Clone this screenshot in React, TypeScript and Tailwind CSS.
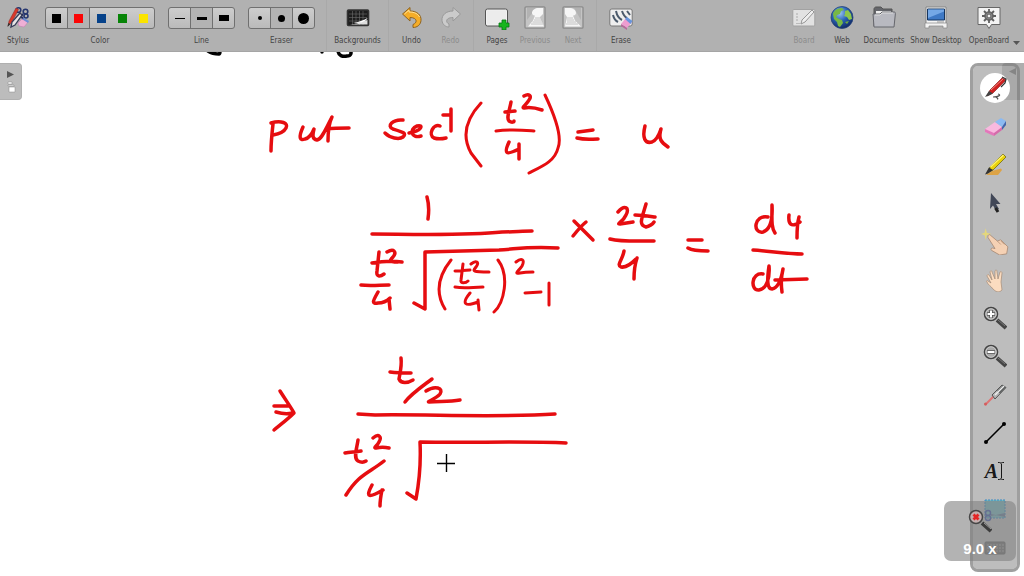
import React from "react";

type IconProps = { children: React.ReactNode; className?: string };

function Icon({ children, className = "size-6" }: IconProps) {
  return (
    <svg viewBox="0 0 24 24" className={`${className} shrink-0`} fill="none" aria-hidden="true">
      {children}
    </svg>
  );
}

function ToolButton({ label, icon, className, disabled }: { label: string; icon: React.ReactNode; className: string; disabled?: boolean }) {
  return (
    <button type="button" disabled={disabled} className={`flex h-full flex-col items-center gap-1 pt-[6px] ${className}`}>
      {icon}
      <span className={`whitespace-nowrap text-[8px] leading-[14px] ${disabled ? "text-[#8c8c8c]" : "text-[#454545]"}`}>{label}</span>
    </button>
  );
}

type Choice = { name: string; mark: string };

function ChoiceGroup({ label, items, selected, joined }: { label: string; items: Choice[]; selected: number; joined?: boolean }) {
  return (
    <div className="flex flex-col items-center pt-[7px]" role="group" aria-label={label}>
      <div
        className={`flex h-[22px] overflow-hidden rounded-[3px] border border-[#707070] bg-linear-to-b from-[#cdcdcd] to-[#bababa] ${joined ? "w-[110px]" : "w-[67px]"}`}
      >
        {items.map((item, i) => (
          <button
            key={item.name}
            type="button"
            aria-label={item.name}
            className={`flex h-full flex-1 items-center justify-center border-[#707070] ${i > 0 && (!joined || i <= 2) ? "border-l" : ""} ${i === selected ? "bg-[#b3b3b3]" : ""}`}
          >
            <span className={`block ${item.mark}`} />
          </button>
        ))}
      </div>
      <span className="mt-[5px] text-[8px] leading-[14px] text-[#454545]">{label}</span>
    </div>
  );
}

const colors: Choice[] = [
  { name: "Black", mark: "size-[9px] bg-black" },
  { name: "Red", mark: "size-[9px] bg-[#fb0606]" },
  { name: "Blue", mark: "size-[9px] bg-[#06428a]" },
  { name: "Green", mark: "size-[9px] bg-[#078407]" },
  { name: "Yellow", mark: "size-[9px] bg-[#fbe400]" },
];
const lines: Choice[] = [
  { name: "Fine line", mark: "h-px w-[10px] bg-black" },
  { name: "Medium line", mark: "h-[3px] w-[10px] bg-black" },
  { name: "Strong line", mark: "h-[6px] w-[10px] bg-black" },
];
const erasers: Choice[] = [
  { name: "Small eraser", mark: "size-1 rounded-full bg-black" },
  { name: "Medium eraser", mark: "size-[7px] rounded-full bg-black" },
  { name: "Large eraser", mark: "size-[11px] rounded-full bg-black" },
];

const StylusIcon = () => (
  <Icon>
    <path d="M12 13 17 8M14 9l4 5" stroke="#1d2c63" strokeWidth="2" />
    <circle cx="12.5" cy="4" r="2.3" stroke="#26366f" strokeWidth="1.6" />
    <circle cx="19.5" cy="5.5" r="2.3" stroke="#26366f" strokeWidth="1.6" />
    <circle cx="20" cy="10" r="2" stroke="#26366f" strokeWidth="1.6" />
    <path d="m2 20 1-5L10 2l2.500 1.500L6 16Z" fill="#d9392b" stroke="#8e2c26" strokeWidth=".5" />
    <path d="m5 21 1-5 8-9 2 2-7 10Z" fill="#e7e5e5" stroke="#373b58" strokeWidth="1.300" />
    <path d="m1.500 21 .8-4 2.200 1Z" fill="#333" />
    <path d="m12 17 4-4 6 3-4 5-5-1Z" fill="#efafd5" stroke="#c37bad" strokeWidth=".5" />
    <path d="m16 13 2-1 5 3-1 2Z" fill="#6c8fd4" />
  </Icon>
);
const BackgroundsIcon = () => (
  <Icon>
    <rect x="1.500" y="4" width="21" height="15.500" rx="1" fill="#1d1d1d" stroke="#343434" strokeWidth="1.600" />
    <path d="M3 8h18M3 11.500h18M3 15h18M6.500 5v14M10 5v14M13.500 5v14M17 5v14" stroke="#6d6d6d" strokeWidth=".6" />
    <path d="M4 18.500c5-.3 9-1.500 12-3l5.500-1.500v4.500Z" fill="#ddd" />
    <path d="M7 17c6-1 10-2.500 14.500-5-1 3-6 5.500-14.500 5Z" fill="#fff" />
  </Icon>
);
const UndoIcon = () => (
  <Icon>
    <path d="M2.500 8 10 1.500V5c7 0 11.500 4 11 9.500-.4 4.500-4 7-8 7v-3c5-2 4-7-3-7V15Z" fill="#f5ad28" stroke="#8d6320" strokeWidth="1" />
    <path d="m4.500 8 4.500-4V6c6 0 9 2 10.500 5" stroke="#ffe095" />
  </Icon>
);
const RedoIcon = () => (
  <Icon>
    <path d="M21.500 8 14 1.500V5C7 5 2.500 9 3 14.500c.4 4 3.500 6.500 7 6.500v-3c-4-2-3-6.500 4-6.500V15Z" fill="#cbcbcb" stroke="#999" />
  </Icon>
);
const PagesIcon = () => (
  <Icon className="h-6 w-[26px]">
    <rect x=".5" y="3" width="22" height="17" rx="2" fill="#f3f3f3" stroke="#555" />
    <rect x="2" y="4.500" width="19" height="14" fill="#ececec" />
    <path d="M17 14h4v3h3v4h-3v3h-4v-3h-3v-4h3Z" fill="#17b51d" stroke="#087614" strokeWidth=".8" />
  </Icon>
);
const PreviousIcon = () => (
  <Icon>
    <rect x="2" y=".8" width="20" height="21.400" rx="1" fill="#c4c4c4" stroke="#8a8a8a" strokeWidth="1.300" />
    <path d="M4 2h9L4 14Z" fill="#b2b2b2" />
    <path d="M9 7c0-3 3-5 7-5h4v6l-3 3 4 9.500H5l5-6 2-5c-1 0-3-.5-3-2.500Z" fill="#f6f6f6" />
    <path d="M12 12h6M11 14h8M9.500 16h10M8 18h12" stroke="#b5b5b5" strokeWidth=".8" />
  </Icon>
);
const NextIcon = () => (
  <Icon>
    <rect x="2" y=".8" width="20" height="21.400" rx="1" fill="#c4c4c4" stroke="#8a8a8a" strokeWidth="1.300" />
    <path d="M13 2h7v12Z" fill="#b2b2b2" />
    <path d="M15 7c0-3-3-5-7-5H4v6l2 3-2 9.500h16l-6-6-2-5c1 0 3-.5 3-2.500Z" fill="#f6f6f6" />
    <path d="M6 12h6M6 14h7M6 16h9M5 18h12" stroke="#b5b5b5" strokeWidth=".8" />
  </Icon>
);
const EraseIcon = () => (
  <Icon>
    <rect x=".8" y="3" width="22.400" height="17" rx="2" fill="#eee" stroke="#777" />
    <path d="M4 9c1 4 3 6 5 7M7 5c1 5 4 8 6 9M13 5c1 3 3 6 5 7M18 5l3 4" stroke="#4b5a6b" strokeWidth="2" />
    <path d="m12 18 5-6 6 4-5 6Z" fill="#ee9dd0" />
    <path d="m16 13 2-2 5.500 4-2 3Z" fill="#6795dc" />
    <path d="m12 18 6 4v2l-6-4Z" fill="#b5699a" />
  </Icon>
);
const BoardIcon = () => (
  <Icon>
    <rect x=".8" y="3.500" width="22" height="16.500" rx="1" fill="#e2e2e2" stroke="#a2a2a2" />
    <path d="M5 7v9" stroke="#aaa" strokeDasharray="2 1" />
    <path d="m9 18 1-4L20 4l2 2-9 10Z" fill="#eee" stroke="#969696" />
    <path d="M4 17.500h5" stroke="#bbb" />
  </Icon>
);
const WebIcon = () => (
  <Icon>
    <defs>
      <radialGradient id="sea" cx=".4" cy=".3" r=".7">
        <stop stopColor="#9ac5f2" />
        <stop offset=".5" stopColor="#2b65b5" />
        <stop offset="1" stopColor="#102a68" />
      </radialGradient>
    </defs>
    <circle cx="12" cy="11.500" r="11" fill="url(#sea)" stroke="#24447a" strokeWidth=".8" />
    <path d="M3 8c1-4 5-6 9-6l2 2-3 1-1 3-3 1-1 2 3 2 3 1 1 3-3 4-2-1-1-4-3-3Z" fill="#78b845" />
    <path d="m15 5 3-1 3 4 1 5-3 1-2-3-3-1 1-2Z" fill="#8bc64d" />
    <path d="m15 16 4-1-2 3Z" fill="#70ad42" />
  </Icon>
);
const DocumentsIcon = () => (
  <Icon>
    <path d="M2 3c0-1 1-2 2-2h5l2 2h9v17H2Z" fill="#65666b" stroke="#555" />
    <path d="M4 5h15v12H4Z" fill="#eee" />
    <path d="M1 8h7l2-2h12c1 0 1.500.5 1.400 1.500L22 21H2Z" fill="#b8b9c0" stroke="#65666c" />
    <path d="M3 9h5l2-2h11" stroke="#ddd" />
  </Icon>
);
const DesktopIcon = () => (
  <Icon>
    <path d="M2 1h20v17H2Z" fill="#f5f5f5" stroke="#858585" />
    <path d="M3.500 3h17v11h-17Z" fill="#3f79c5" stroke="#17365f" />
    <path d="M4 3.500h16v2L4 12Z" fill="#75a8e6" />
    <path d="M1 17h22v5h-4v-2H5v2H1Z" fill="#f2f2f2" stroke="#888" strokeWidth=".7" />
    <path d="M13 16h7" stroke="#999" />
  </Icon>
);
const OpenBoardIcon = () => (
  <Icon>
    <path d="M1 1.500h22v17h-8.500l-2.500 4-2.500-4H1Z" fill="#f3f3f3" stroke="#666" />
    <circle cx="12" cy="10" r="3.800" fill="#aaa" stroke="#666" strokeWidth="2" />
    <circle cx="12" cy="10" r="2" fill="#eee" stroke="#555" />
    <path d="M12 3v3M12 14v3M5 10h3M16 10h3M7 5l2 2M15 13l2 2M17 5l-2 2M9 13l-2 2" stroke="#5e5e5e" strokeWidth="1.800" />
  </Icon>
);

const PenTool = () => (
  <Icon>
    <path d="m4 20 3-6L19 2l4 2L10 17Z" fill="#cf2020" stroke="#7e1717" strokeWidth=".6" />
    <path d="M8 14 20 3" stroke="#f4847c" />
    <path d="m2 21 4-6 4 2.500-4 2Z" fill="#424242" />
    <path d="m19 1 4 2-1 4-4 4" stroke="#333" strokeWidth="1.300" />
    <path d="M10 21c5 0 9-2 5-3m-2 3c1 1 3 2 1 2" stroke="#555" strokeWidth="1.200" />
  </Icon>
);
const EraserTool = () => (
  <Icon>
    <path d="m2 15 10-7 7 5-8 8-9-3Z" fill="#f8b9df" />
    <path d="m2 15 9 4v3l-9-4Z" fill="#e377ba" />
    <path d="m11 19 8-6v3l-8 6Z" fill="#d56baa" />
    <path d="m12 8 6-4 5 3-4 6Z" fill="#8bbaf2" />
    <path d="m19 13 4-6v4l-4 5Z" fill="#4165ae" />
  </Icon>
);
const MarkerTool = () => (
  <Icon>
    <path d="m3 22 6-4 9-2.500 1 1.500-4 5Z" fill="#dda345" />
    <path d="m4 20 3-6L20 1l3 3L10 17Z" fill="#ead20a" stroke="#625b08" strokeWidth=".7" />
    <path d="m7.500 14 13-12" stroke="#fff36a" strokeWidth="1.500" />
    <path d="m2 21.500 4-7 4 2.500-5 3.500Z" fill="#333" />
  </Icon>
);
const PointerTool = () => (
  <Icon>
    <path d="m8 2 9.500 11-4.500-.1 3 5-3 1.600-3-5L7 18Z" fill="#414757" />
    <path d="m12.500 17 2.500 4" stroke="#222" strokeWidth="3" />
  </Icon>
);
const TouchTool = () => (
  <Icon className="size-7">
    <path d="m4 1-1 4-3 1 3 1 1 4 1-4 4-1-4-1Z" fill="#e4d77b" />
    <path d="M6 8c0-1 1-2 2-1l6 5 3-1 6 6-1 6-6 1-7-4c-1-1 0-2 1-2l2 .5L6 9Z" fill="#f5d1b4" stroke="#a17f68" strokeWidth=".6" />
    <path d="m14 12 3 3m0-3 3 3" stroke="#b99378" strokeWidth=".7" />
  </Icon>
);
const HandTool = () => (
  <Icon>
    <path d="M10 21c-2-3-5-4-6-7-1-1 0-2 1-1l3 2L4 8c0-1 1-2 2-1l3 5-2-8c0-1 2-2 2 0l3 7 0-8c1-2 2-1 2 1l1 7 2-7c1-1 2 0 2 1l-1 9 1 8c-3 3-6 2-9-1Z" fill="#fbdcc0" stroke="#a58b77" strokeWidth=".7" />
  </Icon>
);
const Lens = ({ minus = false }: { minus?: boolean }) => (
  <Icon>
    <path d="m14 14 9 8" stroke="#444" strokeWidth="4" />
    <path d="m15 14 7 6" stroke="#777" />
    <circle cx="8" cy="8" r="6.500" fill="#aaa" stroke="#444" strokeWidth="1.600" />
    <circle cx="8" cy="8" r="5.300" stroke="#ddd" strokeWidth=".7" />
    <path d={minus ? "M4 8h8" : "M4 8h8M8 4v8"} stroke="#555" strokeWidth="3.500" />
    <path d={minus ? "M4.500 8h7" : "M4.500 8h7M8 4.500v7"} stroke="white" strokeWidth="2" />
  </Icon>
);
const LaserTool = () => (
  <Icon>
    <path d="M2 22 11 13" stroke="#df7474" strokeWidth="2" />
    <circle cx="2.500" cy="21" r="1.500" fill="#d25e5e" />
    <path d="M9 12 19 2l4 2.500L12 16Z" fill="#b5b5b5" stroke="#555" />
    <path d="m14 8 6-6 3 2.500-6 6Z" fill="#5f6262" />
    <path d="m12 12 9-9" stroke="#eee" strokeWidth="1.400" />
  </Icon>
);
const LineTool = () => (
  <Icon>
    <path d="M3 21 21 3" stroke="black" strokeWidth="1.600" />
    <circle cx="3" cy="21" r="2" fill="black" />
    <circle cx="21" cy="3" r="2" fill="black" />
  </Icon>
);
const TextTool = () => (
  <span className="flex items-center font-['Liberation_Serif',serif] text-[20px] leading-6 text-[#181818]">
    <b className="italic">A</b>
    <svg viewBox="0 0 6 20" className="h-5 w-[6px]" fill="none" stroke="currentColor" aria-hidden="true">
      <path d="M0 1.500c2 0 3 0 3 1 0-1 1-1 3-1M3.500 3v14M0 18.500c2 0 3 0 3-1 0 1 1 1 3 1" />
    </svg>
  </span>
);
const CaptureTool = () => (
  <Icon>
    <rect x="2" y="2" width="20" height="18" fill="#76b7bd" stroke="#378bc4" strokeDasharray="2 1" />
    <path d="m8 18 14-3v4l-14-3" fill="#667d9c" />
    <circle cx="5" cy="15" r="2.500" stroke="#4057ac" strokeWidth="1.500" />
    <circle cx="5" cy="20" r="2.500" stroke="#4057ac" strokeWidth="1.500" />
  </Icon>
);
const KeyboardTool = () => (
  <Icon>
    <rect x="2" y="6" width="20" height="12" rx="1" fill="#777" stroke="#666" />
    <path d="M4 9h17M4 12h17M4 15h17" stroke="#aaa" strokeDasharray="2 1" />
  </Icon>
);

const palette = [
  { name: "Pen", icon: <PenTool /> },
  { name: "Eraser", icon: <EraserTool /> },
  { name: "Highlighter", icon: <MarkerTool /> },
  { name: "Select", icon: <PointerTool /> },
  { name: "Interact", icon: <TouchTool /> },
  { name: "Scroll page", icon: <HandTool /> },
  { name: "Zoom in", icon: <Lens /> },
  { name: "Zoom out", icon: <Lens minus /> },
  { name: "Laser pointer", icon: <LaserTool /> },
  { name: "Draw lines", icon: <LineTool /> },
  { name: "Write text", icon: <TextTool /> },
  { name: "Capture", icon: <CaptureTool /> },
  { name: "Virtual keyboard", icon: <KeyboardTool /> },
];

function Ink() {
  return (
    <svg
      viewBox="0 52 1024 524"
      className="absolute top-0 left-0 h-[524px] w-[1024px]"
      fill="none"
      strokeLinecap="round"
      strokeLinejoin="round"
      role="img"
      aria-label="Handwritten working on the board"
    >
      <g stroke="black" strokeWidth="3.500">
        <path d="M208 51c3 2 6 3 11 3 1 0 1-2 1-3M322 49v3M338 50c0 6 5 7 9 6 4 0 5-3 3-6" />
        <path d="M245 51h4" strokeWidth="2" />
      </g>
      <g stroke="#e60d10" strokeWidth="3.500">
        <path d="M273 124c-1 9-2 18-2 27M271 123c10-3 18 0 15 5-2 4-7 6-13 7M303 127c-5 11-3 14 2 12 4-1 7-5 9-10-2 8-1 10 3 11 5-1 8-10 15-23-3 6-4 15-4 24M327 129c7-1 15-1 22-1" />
        <path d="M403 120c-10-1-17 6-10 9 10 3 14 4 10 8-4 3-13 1-18-4M409 133c13-2 15-9 8-7-8 3-6 13 4 10M440 126c-7-3-12 9-6 12 3 1 8 1 12 0M443 115h8M451 109v22" />
        <path d="M511 102c-1 7-5 16-2 19 3 2 5 1 5 0M505 112l10-1M524 96c5-3 8 0 5 4-2 4-8 8-5 8 5-1 12 0 18 2M509 142c-5 11-4 14 10 7M519 144v15" />
        <path d="M578 132l15-2M577 138c8 2 14 1 21 1M645 126c-3 12 0 18 7 16 5-2 7-7 9-13-3 10 0 13 7 18" />
        <path d="M427 197c2 7 2 15 1 22M372 234c32 0 92 2 130-2 12 0 20-1 30-1M379 252l-2 19c-1 6 3 6 7 3M372 263c12-2 22-2 30-1M387 252c7-4 10 0 6 5-4 4-5 5 5 5M361 285c9 1 19 0 28 0M378 292c-5 9-7 12 0 11 5 0 9-2 12-5M389 299l1 10M414 303l11 6V252l74-2c18-1 29-4 59-2" />
        <path d="M574 221l19 19M586 222c-5 4-9 9-13 14" />
        <path d="M618 212c7-8 12-4 8 3-3 7-10 9-6 9l13-2M646 204c-4 14-8 21 0 23 4-1 6-2 8-5M635 215c7 0 13 1 20 2M610 239c12 3 27 2 44 2M624 251c-1 8-8 14-3 16 6 1 11-4 15-8M637 258c-3 9-3 14-3 21M688 240h14M688 248c5 3 13 3 20 3" />
        <path d="M768 217c-14-3-16 17-5 15 6-2 10-10 9-27 0 14-1 22 3 28M789 215c-1 9 2 13 11 7M799 217c-2 7-2 14-2 21M753 250c15 1 35 4 49 4M763 274c-12-2-13 17-4 16 8-1 11-13 10-24-2 14-2 23 3 23 6-1 9-8 11-20-2 8-2 16-1 23M775 280l32-1" />
        <path d="M280 391c7 11 12 18 14 22-6 6-14 12-20 17M274 406h15M276 412c7 2 12 2 16 1" />
        <path d="M401 358c1 8-1 15-2 21 2 5 9 4 14 1M390 372c8 1 14 1 21 1M432 379c-12 9-21 15-27 23M426 391c9-6 18-3 14 3-4 5-14 8-11 8 10-1 20 0 31-2" />
        <path d="M358 414l17 1c51-1 122 3 180-1" />
        <path d="M358 440c-1 8-5 18 0 21 2 1 5 2 8 0M345 453c5-1 11-1 16-2M373 438c6-5 9-1 6 4-2 4-6 6-3 6 4-1 9-1 13 0M384 461c-15 12-25 13-38 34M372 485c-7 13-3 13 11 5M382 490c-1 5-2 10-2 16M407 493l9 6c4-21 5-37 4-57 48 1 106-1 146 1" />
      </g>
      <g stroke="#e60d10" strokeWidth="3">
        <path d="M481 103c-15 16-20 32-10 50l10 13M496 131c15-2 25-1 38 0M545 95c9 19 18 41 13 53-3 13-15 18-29 25" />
        <path d="M451 260c-12 15-17 31-6 49M463 264l-2 16c-1 4 5 3 7 1M455 271l15-1M471 264c5-4 9-2 5 3-3 4-5 5 13 5M455 287c10 2 18 0 28 0M470 293c-9 11-5 14 8 9M478 300l1 10M498 260c12 16 6 43-4 52M516 262c6-5 9-2 6 4-3 5-9 8-2 7 5-1 9-1 13-1M525 293l16-1M549 283v22" />
      </g>
      <path d="M437 463.500h18M446.500 454v18" stroke="black" strokeWidth="1.400" strokeLinecap="butt" />
    </svg>
  );
}

export default function App() {
  return (
    <div className="flex h-screen flex-col overflow-hidden bg-white font-['DejaVu_Sans_Condensed','Noto_Sans',sans-serif]">
      <header className="z-10 flex h-[52px] shrink-0 justify-between border-b border-[#a5a5a5] bg-[#b1b1b1]">
        <div className="flex">
          <div className="flex gap-[13px] pr-[11px] pl-1">
            <ToolButton label="Stylus" icon={<StylusIcon />} className="w-7" />
            <ChoiceGroup label="Color" items={colors} selected={1} joined />
            <ChoiceGroup label="Line" items={lines} selected={1} />
            <ChoiceGroup label="Eraser" items={erasers} selected={1} />
          </div>
          <div className="flex border-l border-[#a9a9a9]">
            <ToolButton label="Backgrounds" icon={<BackgroundsIcon />} className="w-[61px]" />
          </div>
          <div className="flex border-l border-[#a9a9a9] px-[3px]">
            <ToolButton label="Undo" icon={<UndoIcon />} className="w-[39px]" />
            <ToolButton label="Redo" icon={<RedoIcon />} className="w-[39px]" disabled />
          </div>
          <div className="flex border-l border-[#a9a9a9] px-1">
            <ToolButton label="Pages" icon={<PagesIcon />} className="w-[38px]" />
            <ToolButton label="Previous" icon={<PreviousIcon />} className="w-[38px]" disabled />
            <ToolButton label="Next" icon={<NextIcon />} className="w-[38px]" disabled />
          </div>
          <div className="flex border-l border-[#a9a9a9]">
            <ToolButton label="Erase" icon={<EraseIcon />} className="w-12" />
          </div>
        </div>
        <div className="flex pr-[3px]">
          <ToolButton label="Board" icon={<BoardIcon />} className="w-[38px]" disabled />
          <ToolButton label="Web" icon={<WebIcon />} className="w-[38px]" />
          <ToolButton label="Documents" icon={<DocumentsIcon />} className="w-[46px]" />
          <ToolButton label="Show Desktop" icon={<DesktopIcon />} className="w-[58px]" />
          <ToolButton label="OpenBoard" icon={<OpenBoardIcon />} className="w-12" />
          <button type="button" aria-label="More" className="flex items-end pb-[6px]">
            <svg viewBox="0 0 8 4" className="h-1 w-2" aria-hidden="true">
              <path d="M0 0h7L3.500 4Z" fill="#555" />
            </svg>
          </button>
        </div>
      </header>

      <main className="relative flex-1">
        <Ink />

        <button
          type="button"
          aria-label="Show page navigator"
          className="absolute top-[11px] left-0 flex h-[37px] w-[22px] items-center justify-center rounded-r-[4px] border border-l-0 border-[#b0b0b0] bg-[#bcbcbc]"
        >
          <svg viewBox="0 0 10 24" className="h-6 w-[10px]" aria-hidden="true">
            <path d="M1 1l7 3.500L1 8Z" fill="#555" />
            <path d="M2 12h4v2H2Zm0 3h6v1H2Zm1 2h6v5H3Z" fill="#fff" stroke="#888" strokeWidth=".5" />
          </svg>
        </button>

        <div className="absolute top-[11px] right-0 flex h-[37px] w-[22px] items-start justify-center rounded-l-[4px] bg-[#8a8a8ab0] pt-[5px]">
          <svg viewBox="0 0 8 7" className="h-[7px] w-2" aria-hidden="true">
            <path d="M7 0v7L0 3.500Z" fill="#222" />
          </svg>
        </div>

        <nav
          aria-label="Drawing tools"
          className="absolute top-[11px] right-1 bottom-1 flex w-[50px] flex-col items-center justify-between rounded-[8px] border-[3px] border-[#808080c0] bg-[#a7a7a7bf] bg-clip-padding pt-[3px] pr-px pb-[2px]"
        >
          {palette.map((tool, i) => (
            <button
              key={tool.name}
              type="button"
              aria-label={tool.name}
              className={`flex items-center justify-center ${i === 0 ? "my-1 size-[30px] rounded-full bg-white" : "h-[38px] w-[38px]"}`}
            >
              {tool.icon}
            </button>
          ))}
        </nav>

        <div className="absolute right-2 bottom-[15px] flex h-[60px] w-[72px] flex-col items-center gap-[6px] rounded-[7px] bg-[#80808099] pt-2">
          <Icon>
            <path d="m14 14 9 8" stroke="#3c3c3c" strokeWidth="4" />
            <path d="m16 14 7 6" stroke="#999" />
            <circle cx="8" cy="8" r="6.500" fill="#c4b0b0" stroke="#474747" strokeWidth="1.500" />
            <path d="m5.500 5.500 5 5m0-5-5 5" stroke="#e42727" strokeWidth="2.800" />
          </Icon>
          <span className="font-['Liberation_Sans',sans-serif] text-[15px] leading-5 font-bold text-white">9.0 x</span>
        </div>
      </main>
    </div>
  );
}
